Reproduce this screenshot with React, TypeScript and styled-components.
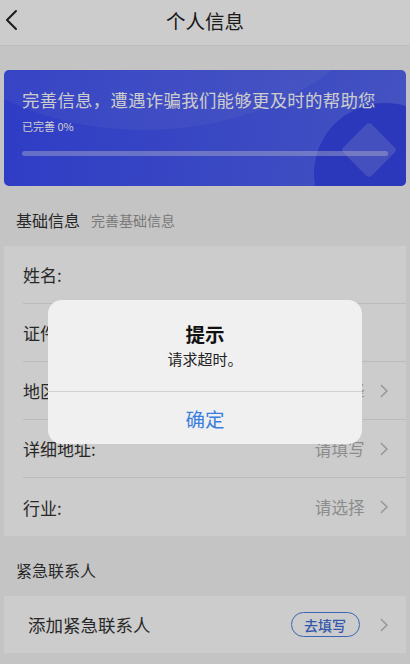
import styled, { createGlobalStyle } from "styled-components";

const GlobalStyle = createGlobalStyle`
  html, body {
    margin: 0;
    padding: 0;
    background: #f5f5f5;
  }
  body {
    font-family: "Noto Sans CJK SC", "Noto Sans", sans-serif;
    color: #333;
  }
`;

const Page = styled.div`
  width: 410px;
  height: 664px;
  overflow: hidden;
  background: #f5f5f5;
  position: relative;
`;

const Header = styled.header`
  height: 46px;
  display: grid;
  grid-template-columns: 46px 1fr 46px;
  align-items: center;
  background: #ffffff;
  border-bottom: 1px solid #eeeeee;
  box-sizing: border-box;

  .title {
    text-align: center;
    font-size: 19.5px;
    color: #222;
    line-height: 1;
    margin-top: -4px;
  }
`;

const BackButton = styled.div`
  display: flex;
  align-items: center;
  padding-left: 4px;
  margin-top: -5px;
`;

const Banner = styled.section`
  position: relative;
  margin: 24px 4px 0;
  height: 116px;
  border-radius: 5px;
  overflow: hidden;
  background: linear-gradient(100deg, #3a4cf8 0%, #4a5cf4 60%, #5668f2 100%);
  padding: 20px 18px 0;
  box-sizing: border-box;
  color: #ffffff;

  .headline {
    position: relative;
    font-size: 17.4px;
    line-height: 20px;
    letter-spacing: 0.3px;
    white-space: nowrap;
  }
  .progress_label {
    position: relative;
    margin-top: 9px;
    font-size: 11px;
    line-height: 14px;
  }
`;

const BannerArc = styled.div`
  position: absolute;
  left: -120px;
  top: -330px;
  width: 520px;
  height: 390px;
  border-radius: 50%;
  background: rgba(255, 255, 255, 0.06);
`;

const BannerCircle = styled.div`
  position: absolute;
  right: -50px;
  top: 33px;
  width: 142px;
  height: 142px;
  border-radius: 50%;
  background: #3040e8;
  opacity: 0.8;
`;

const BannerDiamond = styled.div`
  position: absolute;
  right: 17px;
  top: 60px;
  width: 40px;
  height: 40px;
  transform: rotate(45deg);
  border-radius: 4px;
  background: rgba(255, 255, 255, 0.16);
`;

const ProgressTrack = styled.div`
  position: relative;
  margin-top: 18px;
  height: 5px;
  width: 366px;
  border-radius: 3px;
  background: rgba(255, 255, 255, 0.35);
`;

const SectionTitle = styled.div`
  display: flex;
  align-items: center;
  gap: 11px;
  padding: 8px 16px 0;
  height: 60px;
  box-sizing: border-box;
  font-size: 16px;
  color: #333;

  .hint {
    font-size: 14px;
    color: #999;
  }
`;

const Card = styled.div`
  margin: 0 4px;
  background: #ffffff;
  padding-left: 19px;
`;

const Row = styled.div<{ $last?: boolean }>`
  height: 58px;
  display: flex;
  align-items: center;
  justify-content: space-between;
  border-bottom: ${(p) => (p.$last ? "none" : "1px solid #eaeaea")};
  box-sizing: border-box;
  padding-right: 18px;

  .label {
    font-size: 17px;
    color: #333;
  }
`;

const RowEnd = styled.div`
  display: flex;
  align-items: center;
  gap: 15px;

  .value {
    font-size: 16.6px;
    color: #b0b0b0;
  }
`;

const ContactRow = styled.div`
  margin: 0 4px;
  background: #ffffff;
  height: 57px;
  display: flex;
  align-items: center;
  justify-content: space-between;
  padding: 0 18px 0 24px;

  .label {
    font-size: 17.5px;
    color: #333;
  }
`;

const FillButton = styled.div`
  width: 69px;
  height: 25px;
  box-sizing: border-box;
  border: 1px solid #4f7fe0;
  border-radius: 13px;
  display: flex;
  align-items: center;
  justify-content: center;
  font-size: 14px;
  font-weight: 500;
  color: #3f6fd6;
`;

const ContactEnd = styled.div`
  display: flex;
  align-items: center;
  gap: 20px;
`;

const Mask = styled.div`
  position: absolute;
  inset: 0;
  background: rgba(0, 0, 0, 0.2);
`;

const Dialog = styled.div`
  position: absolute;
  left: 48px;
  top: 300px;
  width: 314px;
  border-radius: 14px;
  background: #f0f0f0;
  overflow: hidden;
  text-align: center;

  .title {
    padding-top: 21px;
    font-size: 19.5px;
    font-weight: 700;
    line-height: 26px;
    color: #111;
  }
  .message {
    padding-top: 2px;
    padding-bottom: 22px;
    font-size: 15px;
    line-height: 20px;
    color: #222;
  }
`;

const DialogButton = styled.div`
  border-top: 1px solid #d2d2d2;
  height: 52px;
  display: flex;
  align-items: center;
  justify-content: center;
  font-size: 19.5px;
  color: #3a7fe0;
`;

const Chevron = ({ size = 14, color = "#bdbdbd" }: { size?: number; color?: string }) => (
  <svg width={size * 0.6} height={size} viewBox="0 0 9 15" fill="none">
    <path d="M1.5 1.5 L7.5 7.5 L1.5 13.5" stroke={color} strokeWidth="1.6" strokeLinecap="round" strokeLinejoin="round" />
  </svg>
);

const basicFields = [
  { label: "姓名:", value: "", arrow: false },
  { label: "证件号码:", value: "", arrow: false },
  { label: "地区:", value: "请选择", arrow: true },
  { label: "详细地址:", value: "请填写", arrow: true },
  { label: "行业:", value: "请选择", arrow: true },
];

const App = () => {
  return (
    <Page>
      <GlobalStyle />
      <Header>
        <BackButton>
          <svg width="14" height="22" viewBox="0 0 14 22" fill="none">
            <path d="M12 2 L3 11 L12 20" stroke="#222" strokeWidth="2" strokeLinecap="round" strokeLinejoin="round" />
          </svg>
        </BackButton>
        <div className="title">个人信息</div>
        <div />
      </Header>

      <Banner>
        <BannerArc />
        <BannerCircle />
        <BannerDiamond />
        <div className="headline">完善信息，遭遇诈骗我们能够更及时的帮助您</div>
        <div className="progress_label">已完善 0%</div>
        <ProgressTrack />
      </Banner>

      <SectionTitle>
        <span>基础信息</span>
        <span className="hint">完善基础信息</span>
      </SectionTitle>

      <Card>
        {basicFields.map((f, i) => (
          <Row key={f.label} $last={i === basicFields.length - 1}>
            <span className="label">{f.label}</span>
            {f.arrow && (
              <RowEnd>
                <span className="value">{f.value}</span>
                <Chevron />
              </RowEnd>
            )}
          </Row>
        ))}
      </Card>

      <SectionTitle>
        <span>紧急联系人</span>
      </SectionTitle>

      <ContactRow>
        <span className="label">添加紧急联系人</span>
        <ContactEnd>
          <FillButton>去填写</FillButton>
          <Chevron />
        </ContactEnd>
      </ContactRow>

      <Mask />
      <Dialog>
        <div className="title">提示</div>
        <div className="message">请求超时。</div>
        <DialogButton>确定</DialogButton>
      </Dialog>
    </Page>
  );
};

export default App;
